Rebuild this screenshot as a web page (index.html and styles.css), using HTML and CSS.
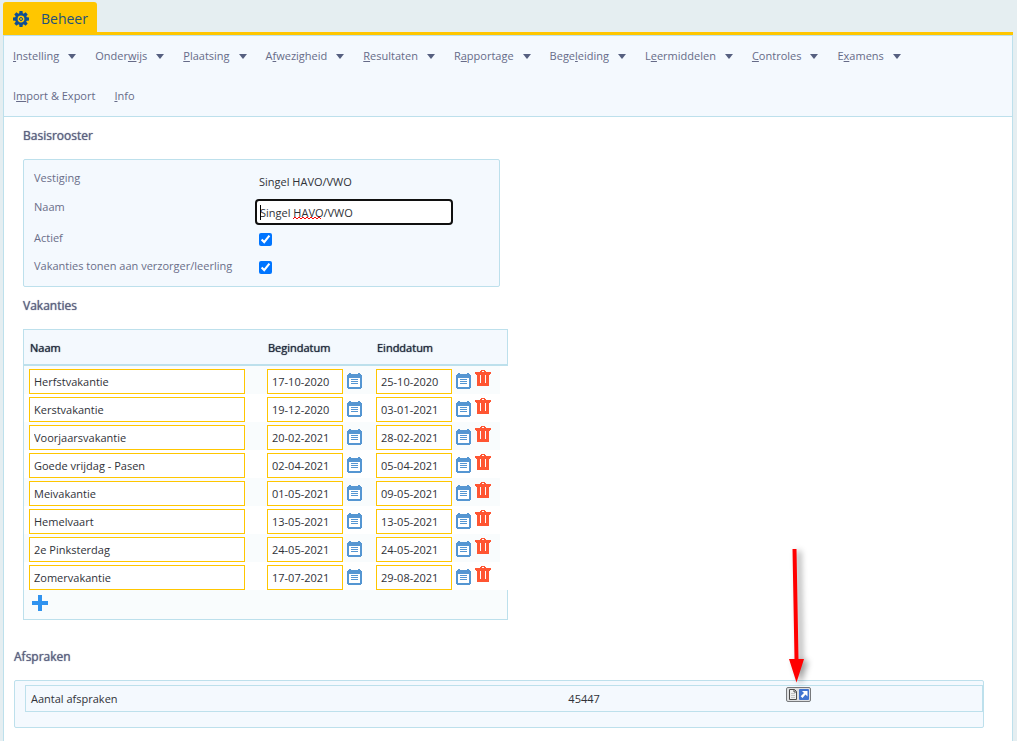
FILE: index.html
```html
<!DOCTYPE html>
<html lang="nl">
  <head>
    <meta charset="UTF-8" />
    <meta name="viewport" content="width=device-width, initial-scale=1.0" />
    <title>Beheer</title>
    <link rel="stylesheet" href="styles.css">
  </head>
  <body>
    <svg class="sprite" aria-hidden="true">
      <symbol id="calendar" viewBox="0 0 15 16">
        <path d="M1 1h1V0h2v1h7V0h2v1h1v1h1v13h-1v1H1v-1H0V2h1z" fill="#5596d2" />
        <path d="M2 5h11v9H2z" fill="#fff" />
        <path d="M4 6h7v1H4zM4 8h7v1H4zM4 10h7v1H4z" fill="#5596d2" />
      </symbol>
      <symbol id="trash" viewBox="0 0 16 16">
        <path fill-rule="evenodd" fill="#ff5532" d="M6 0h4v1h1v1h5v2h-1v1h-1v11H2V5H1V4H0V2h5V1h1zM7 1v1h2V1zM5 5v8h1V5zM10 5v8h1V5z" />
      </symbol>
    </svg>

    <header class="tabs">
      <a class="tab" href="#">
        <svg class="gear" viewBox="0 0 16 16" width="16" height="16">
          <g fill="#0f4f92">
            <path id="tooth" d="M6.500 0h3l.5 4h-4z" />
            <use href="#tooth" transform="rotate(45 8 8)" />
            <use href="#tooth" transform="rotate(90 8 8)" />
            <use href="#tooth" transform="rotate(135 8 8)" />
            <use href="#tooth" transform="rotate(180 8 8)" />
            <use href="#tooth" transform="rotate(225 8 8)" />
            <use href="#tooth" transform="rotate(270 8 8)" />
            <use href="#tooth" transform="rotate(315 8 8)" />
          </g>
          <circle cx="8" cy="8" r="4.700" fill="none" stroke="#0f4f92" stroke-width="2.600" />
          <circle cx="8" cy="8" r="1.500" fill="none" stroke="#0f4f92" stroke-width="1" />
        </svg>
        Beheer
      </a>
    </header>

    <div class="page">
      <nav class="menu">
        <a class="drop" href="#"><span><u>I</u>nstelling</span></a>
        <a class="drop" href="#"><span>Onder<u>w</u>ijs</span></a>
        <a class="drop" href="#"><span><u>P</u>laatsing</span></a>
        <a class="drop" href="#"><span>A<u>f</u>wezigheid</span></a>
        <a class="drop" href="#"><span><u>R</u>esultaten</span></a>
        <a class="drop" href="#"><span>R<u>a</u>pportage</span></a>
        <a class="drop" href="#"><span>Bege<u>l</u>eiding</span></a>
        <a class="drop" href="#"><span>L<u>e</u>ermiddelen</span></a>
        <a class="drop" href="#"><span><u>C</u>ontroles</span></a>
        <a class="drop" href="#"><span>E<u>x</u>amens</span></a>
        <a href="#"><span>I<u>m</u>port &amp; Export</span></a>
        <a href="#"><span><u>I</u>nfo</span></a>
      </nav>

      <main>
        <section class="block">
          <h2>Basisrooster</h2>
          <form class="panel form">
            <span class="label">Vestiging</span>
            <span class="value">Singel HAVO/VWO</span>
            <label class="label" for="naam">Naam</label>
            <div class="name-field">
              <input id="naam" type="text" value="Singel HAVO/VWO" />
              <svg class="marks" width="80" height="20" fill="none" aria-hidden="true">
                <path d="M1.500 2v15" stroke="#000" />
                <path d="M34 16l2-2 2 2 2-2 2 2 2-2 2 2 2-2 2 2 2-2 2 2 2-2 2 2 2-2 2 2" stroke="#f00" />
              </svg>
            </div>
            <label class="label" for="actief">Actief</label>
            <input id="actief" type="checkbox" checked />
            <label class="label" for="tonen">Vakanties tonen aan verzorger/leerling</label>
            <input id="tonen" type="checkbox" checked />
          </form>
        </section>

        <section class="block">
          <h2>Vakanties</h2>
          <table class="holidays">
            <colgroup>
              <col class="col-name" />
              <col class="col-date" />
              <col class="col-end" />
              <col class="col-delete" />
              <col class="col-edge" />
            </colgroup>
            <thead>
              <tr>
                <th>Naam</th>
                <th>Begindatum</th>
                <th>Einddatum</th>
                <th></th>
                <th></th>
              </tr>
            </thead>
            <tbody id="holiday-rows"></tbody>
            <tfoot>
              <tr>
                <td colspan="5">
                  <button class="icon add" type="button" aria-label="Toevoegen">
                    <svg width="16" height="16"><path d="M6 0h4v6h6v4h-6v6H6v-6H0V6h6z" fill="#3093ef" /></svg>
                  </button>
                </td>
              </tr>
            </tfoot>
          </table>
        </section>

        <section class="appointments">
          <h2>Afspraken</h2>
          <div class="panel totals">
            <table>
              <tr>
                <td class="total-name">Aantal afspraken</td>
                <td class="total-count">45447</td>
                <td class="total-link">
                  <a class="open" href="#" aria-label="Openen">
                    <svg width="25" height="15" viewBox="0 0 25 15">
                      <rect x=".5" y=".5" width="24" height="14" rx="1.500" fill="#dfe0e1" stroke="#77797c" />
                      <path d="M3.500 2.500h5l2 2v8h-7z" fill="#eee" stroke="#4c4c4c" />
                      <path d="M8 2.500v2.500h2.500" fill="none" stroke="#4c4c4c" />
                      <path d="M5 6.500h4M5 8.500h4M5 10.500h4" stroke="#c3c3c3" />
                      <rect x="13" y="2" width="10" height="11" rx="1" fill="#3f73d0" />
                      <path d="M16 4h5.500v5.500l-2-2-3 3.500-1.800-1.800 3.300-3.200z" fill="#fff" />
                    </svg>
                    <svg class="pointer" width="32" height="144" viewBox="0 0 32 144" aria-hidden="true">
                      <path d="M6.500 6h4l2 110h5.500L10.500 139.500 3 116h5.500z" fill="#f00" />
                    </svg>
                  </a>
                </td>
              </tr>
            </table>
          </div>
        </section>
      </main>
    </div>

    <script>
      const holidays = [
        ["Herfstvakantie", "17-10-2020", "25-10-2020"],
        ["Kerstvakantie", "19-12-2020", "03-01-2021"],
        ["Voorjaarsvakantie", "20-02-2021", "28-02-2021"],
        ["Goede vrijdag - Pasen", "02-04-2021", "05-04-2021"],
        ["Meivakantie", "01-05-2021", "09-05-2021"],
        ["Hemelvaart", "13-05-2021", "13-05-2021"],
        ["2e Pinksterdag", "24-05-2021", "24-05-2021"],
        ["Zomervakantie", "17-07-2021", "29-08-2021"],
      ];

      function dateField(value, label) {
        return `<div class="date">
          <input type="text" value="${value}" aria-label="${label}" />
          <button class="icon" type="button" aria-label="Kies ${label}">
            <svg width="15" height="16"><use href="#calendar" /></svg>
          </button>
        </div>`;
      }

      document.getElementById("holiday-rows").innerHTML = holidays
        .map(
          ([name, start, end]) => `<tr>
            <td><input class="name" type="text" value="${name}" aria-label="Naam" /></td>
            <td>${dateField(start, "Begindatum")}</td>
            <td>${dateField(end, "Einddatum")}</td>
            <td class="delete">
              <button class="icon" type="button" aria-label="Verwijderen">
                <svg width="16" height="16"><use href="#trash" /></svg>
              </button>
            </td>
            <td class="edge"></td>
          </tr>`
        )
        .join("");
    </script>
  </body>
</html>
```

FILE: styles.css
```css
* {
  box-sizing: border-box;
}

body {
  margin: 0;
  padding: 2px 4px 0 3px;
  min-height: 100vh;
  display: flex;
  flex-direction: column;
  background: #e5eef1;
  color: #303238;
  font-family: "Open Sans", sans-serif;
  font-size: 11px;
  line-height: 16px;
}

input,
button {
  font: inherit;
  color: inherit;
}

a {
  color: inherit;
  text-decoration: none;
}

svg {
  display: block;
}

h2 {
  margin: 0;
  color: #5b6180;
  font-size: 12px;
  font-weight: 400;
  line-height: 16px;
}

/* soft bold that keeps the regular letter widths */
h2,
th {
  text-shadow: 0 0 1px currentColor;
}

table {
  width: 100%;
  table-layout: fixed;
  border-collapse: separate;
  border-spacing: 0;
}

th,
td {
  padding: 0;
  text-align: left;
  vertical-align: top;
}

.sprite {
  display: none;
}

/* top tab */
.tabs {
  display: flex;
  border-bottom: 3px solid #ffc600;
}

.tab {
  display: flex;
  align-items: center;
  gap: 12px;
  height: 30px;
  padding: 3px 9px 0 10px;
  border-radius: 3px 3px 0 0;
  background: #ffc600;
  color: #22517c;
  font-size: 14px;
}

.page {
  flex: 1;
  border: 1px solid #bde0ec;
  border-bottom: 0;
  background: #fff;
}

/* menu bar */
.menu {
  display: flex;
  flex-wrap: wrap;
  column-gap: 19px;
  padding: 0 19px 0 9px;
  border-bottom: 1px solid #bde0ec;
  background: #f4f9fe;
  color: #666b88;
}

.menu a {
  display: flex;
  align-items: center;
  gap: 9px;
  height: 40px;
}

.menu .drop::after {
  content: "";
  border: 4px solid transparent;
  border-top: 5px solid #566080;
  border-bottom: 0;
}

.panel {
  border: 1px solid #bde0ec;
  border-radius: 2px;
  background: #f4f9fe;
}

.block {
  padding: 11px 19px 0;
}

.block h2 {
  margin-bottom: 15px;
}

/* basisrooster */
.form {
  display: grid;
  grid-template-columns: 225px 1fr;
  grid-template-rows: 29px 31px 28px 28px;
  align-items: start;
  max-width: 477px;
  padding: 10px 10px 0;
}

.label {
  color: #6a6e89;
}

.value {
  padding-top: 4px;
}

.form input[type="checkbox"] {
  width: 13px;
  height: 13px;
  margin: 3px 0 0;
}

.name-field {
  position: relative;
  margin-left: -4px;
}

.name-field input {
  display: block;
  width: 198px;
  height: 26px;
  padding: 1px 3px 0;
  border: 2px solid #101010;
  border-radius: 4px;
  background: #fff;
  outline: none;
}

.marks {
  position: absolute;
  top: 4px;
  left: 4px;
  pointer-events: none;
}

/* vakanties */
.holidays {
  max-width: 485px;
  border-left: 1px solid #bde0ec;
}

.col-name {
  width: 238px;
}

.col-date {
  width: 109px;
}

.col-end {
  width: 101px;
}

.col-delete {
  width: 28px;
}

.holidays th {
  height: 37px;
  padding: 2px 6px 0;
  border-top: 1px solid #bde0ec;
  border-bottom: 2px solid #bde0ec;
  background: #f4f9fe;
  color: #222a3c;
  font-weight: 400;
  vertical-align: middle;
}

.holidays th:last-child,
.holidays tfoot td {
  border-right: 1px solid #bde0ec;
}

.holidays tbody td {
  height: 28px;
  padding: 3px 0 0 5px;
}

.holidays tbody tr:nth-child(odd) td:not(.edge) {
  background: #f9fcfd;
}

.holidays input {
  display: block;
  width: 76px;
  height: 25px;
  padding: 0 4px;
  border: 1px solid #ffc600;
  background: #fff;
}

.holidays .name {
  width: 216px;
}

.holidays tbody .delete {
  padding: 4px 0 0 3px;
}

.date {
  display: flex;
  gap: 4px;
}

.icon {
  display: block;
  padding: 0;
  border: 0;
  background: none;
}

.date .icon {
  align-self: flex-start;
  padding-top: 4px;
}

.holidays tfoot td {
  height: 30px;
  padding: 5px 8px 8px;
  border-bottom: 1px solid #bde0ec;
  background: #f9fcfd;
}

/* afspraken */
.appointments {
  padding: 29px 28px 0 10px;
}

.appointments h2 {
  margin-bottom: 15px;
}

.totals {
  padding: 4px 0 15px 10px;
}

.totals table {
  border: 1px solid #bde0ec;
}

.totals td {
  height: 25px;
  padding-top: 5px;
}

.totals .total-name {
  width: 56%;
  padding-left: 5px;
}

.totals .total-count {
  width: 23%;
  padding-left: 7px;
}

.totals .total-link {
  padding: 1px 0 0 5px;
}

.open {
  position: relative;
  display: inline-block;
}

.pointer {
  position: absolute;
  bottom: 15px;
  left: 0;
  filter: drop-shadow(4px 2px 3px rgba(0, 0, 0, 0.4));
  pointer-events: none;
}
```
